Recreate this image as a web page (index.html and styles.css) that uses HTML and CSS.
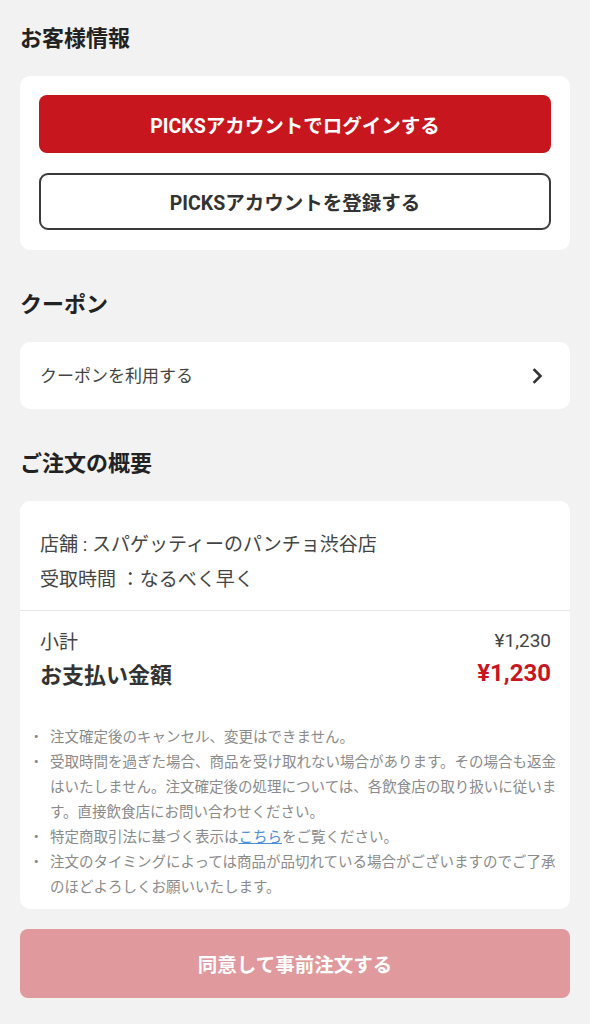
FILE: index.html
```html
<!DOCTYPE html>
<html lang="ja">
<head>
<meta charset="utf-8">
<title>注文確認</title>
<link rel="stylesheet" href="styles.css">
</head>
<body>
<main class="page">
  <section class="section">
    <h2 class="section-title">お客様情報</h2>
    <div class="card card-account">
      <button class="btn btn-primary" type="button">PICKSアカウントでログインする</button>
      <button class="btn btn-outline" type="button">PICKSアカウントを登録する</button>
    </div>
  </section>

  <section class="section">
    <h2 class="section-title">クーポン</h2>
    <a class="card card-coupon" href="#">
      <span class="coupon-label">クーポンを利用する</span>
      <svg class="chevron" width="11" height="16" viewBox="0 0 11 16" aria-hidden="true">
        <path d="M2.5 2 L8.5 8 L2.5 14" fill="none" stroke="#333" stroke-width="2.6" stroke-linecap="square" stroke-linejoin="miter"/>
      </svg>
    </a>
  </section>

  <section class="section">
    <h2 class="section-title">ご注文の概要</h2>
    <div class="card card-summary">
      <div class="order-info">
        <p class="info-line">店舗 : スパゲッティーのパンチョ渋谷店</p>
        <p class="info-line">受取時間 ：なるべく早く</p>
      </div>
      <div class="totals">
        <div class="total-row subtotal">
          <span>小計</span>
          <span class="amount">¥1,230</span>
        </div>
        <div class="total-row grand">
          <span>お支払い金額</span>
          <span class="amount amount-red">¥1,230</span>
        </div>
      </div>
      <ul class="notes">
        <li><span>注文確定後のキャンセル、変更はできません。</span></li>
        <li><span>受取時間を過ぎた場合、商品を受け取れない場合があります。その場合も返金はいたしません。注文確定後の処理については、各飲食店の取り扱いに従います。直接飲食店にお問い合わせください。</span></li>
        <li><span>特定商取引法に基づく表示は<a class="link" href="#">こちら</a>をご覧ください。</span></li>
        <li><span>注文のタイミングによっては商品が品切れている場合がございますのでご了承のほどよろしくお願いいたします。</span></li>
      </ul>
    </div>
  </section>

  <button class="btn btn-submit" type="button">同意して事前注文する</button>
</main>
</body>
</html>
```

FILE: styles.css
```css
* { box-sizing: border-box; }

html, body {
  margin: 0;
  padding: 0;
  background: #f2f2f2;
}

body {
  font-family: Roboto, "Noto Sans CJK JP", sans-serif;
  color: #333;
}

.page {
  padding: 24px 20px 20px;
  display: flex;
  flex-direction: column;
}

.section + .section { margin-top: 40px; }

.section-title {
  margin: 0 0 22px;
  font-size: 22px;
  line-height: 30px;
  font-weight: 700;
  color: #222;
}

.card {
  background: #fff;
  border-radius: 10px;
}

/* account card */
.card-account {
  padding: 19px 19px 20px;
  display: flex;
  flex-direction: column;
  gap: 20px;
}

.btn {
  font-family: Roboto, "Noto Sans CJK JP", sans-serif;
  font-weight: 700;
  font-size: 19.5px;
  border: none;
  cursor: pointer;
  display: flex;
  align-items: center;
  justify-content: center;
  margin: 0;
}

.btn-primary {
  height: 58px;
  background: #c8161e;
  color: #fff;
  border-radius: 8px;
}

.btn-outline {
  height: 57px;
  background: #fff;
  color: #333;
  border: 2px solid #3a3a3a;
  border-radius: 9px;
}

/* coupon card */
.card-coupon {
  height: 67px;
  padding: 0 27px 0 20px;
  display: flex;
  align-items: center;
  justify-content: space-between;
  text-decoration: none;
}

.coupon-label {
  font-size: 17px;
  line-height: 24px;
  color: #444;
}

.chevron { display: block; }

/* summary card */
.card-summary {
  padding-bottom: 9px;
}

.order-info {
  padding: 26px 20px 13px;
  border-bottom: 1px solid #e6e6e6;
}

.info-line {
  margin: 0;
  font-size: 19px;
  line-height: 35px;
  color: #444;
}

.totals {
  padding: 15px 19px 0 20px;
}

.total-row {
  display: flex;
  justify-content: space-between;
  align-items: center;
}

.subtotal {
  height: 28px;
  font-size: 19px;
  color: #444;
}

.grand {
  height: 38px;
  font-size: 22px;
  font-weight: 700;
  color: #333;
}

.amount-red {
  color: #c8151f;
  font-size: 24px;
  font-weight: 700;
}

.notes {
  list-style: none;
  margin: 0;
  padding: 33px 10px 0 9px;
  font-size: 14.5px;
  line-height: 25px;
  color: #8a8a8a;
}

.notes li {
  display: grid;
  grid-template-columns: 21px 1fr;
}

.notes li::before {
  content: "・";
}

.link {
  color: #4a8fd8;
  text-decoration: underline;
}

/* submit */
.btn-submit {
  margin-top: 20px;
  height: 69px;
  width: 100%;
  background: #e0999c;
  color: #fff;
  border-radius: 8px;
  font-size: 19.5px;
}
```
